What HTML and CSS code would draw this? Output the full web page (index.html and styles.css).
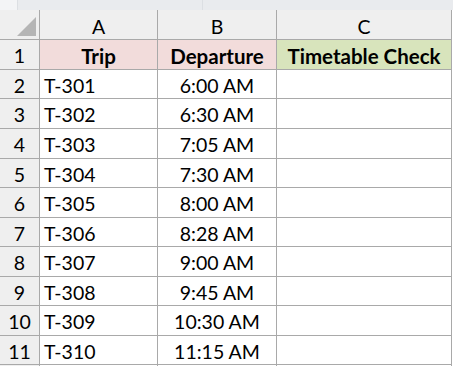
FILE: index.html
```html
<!DOCTYPE html>
<html>
<head>
<meta charset="utf-8">
<link rel="stylesheet" href="styles.css">
</head>
<body>
<div class="topbar"><span class="tb-a"></span><span class="tb-b"></span><span class="tb-c"></span></div>
<div class="sheet">
  <div class="corner"><span class="tri"></span></div>
  <div class="colhead">A</div>
  <div class="colhead">B</div>
  <div class="colhead">C</div>

  <div class="rowhead">1</div>
  <div class="cell hdr pink">Trip</div>
  <div class="cell hdr pink">Departure</div>
  <div class="cell hdr green">Timetable Check</div>

  <div class="rowhead">2</div><div class="cell">T-301</div><div class="cell ctr">6:00 AM</div><div class="cell"></div>
  <div class="rowhead">3</div><div class="cell">T-302</div><div class="cell ctr">6:30 AM</div><div class="cell"></div>
  <div class="rowhead">4</div><div class="cell">T-303</div><div class="cell ctr">7:05 AM</div><div class="cell"></div>
  <div class="rowhead">5</div><div class="cell">T-304</div><div class="cell ctr">7:30 AM</div><div class="cell"></div>
  <div class="rowhead">6</div><div class="cell">T-305</div><div class="cell ctr">8:00 AM</div><div class="cell"></div>
  <div class="rowhead">7</div><div class="cell">T-306</div><div class="cell ctr">8:28 AM</div><div class="cell"></div>
  <div class="rowhead">8</div><div class="cell">T-307</div><div class="cell ctr">9:00 AM</div><div class="cell"></div>
  <div class="rowhead">9</div><div class="cell">T-308</div><div class="cell ctr">9:45 AM</div><div class="cell"></div>
  <div class="rowhead">10</div><div class="cell">T-309</div><div class="cell ctr">10:30 AM</div><div class="cell"></div>
  <div class="rowhead">11</div><div class="cell">T-310</div><div class="cell ctr">11:15 AM</div><div class="cell"></div>
  <div class="rowhead"></div><div class="cell"></div><div class="cell"></div><div class="cell"></div>
</div>
</body>
</html>
```
FILE: styles.css
```css
html, body {
  margin: 0;
  padding: 0;
  background: #ffffff;
  overflow: hidden;
  width: 453px;
  height: 366px;
}

body {
  font-family: Lato, "Open Sans", sans-serif;
  font-size: 19.5px;
  color: #000;
}

.topbar {
  height: 10px;
  background: #e9ebee;
  display: flex;
}

.tb-a { width: 17px; background: #f3f4f6; border-right: 1px solid #dcdfe3; }
.tb-b { width: 184px; border-right: 1px solid #dcdfe3; }
.tb-c { flex: 1; }

.sheet {
  display: grid;
  grid-template-columns: 39px 117px 118px 174px;
  grid-template-rows: 29px 29px 28px 29px 29px 28px 29px 28px 29px 28px 29px 28px 1px;
  column-gap: 1px;
  row-gap: 1px;
  background: #a9a9a9;
  width: 452px;
  padding-right: 1px;
  box-sizing: border-box;
}

.corner {
  background: #efefef;
  position: relative;
}

.tri {
  position: absolute;
  right: 3px;
  bottom: 3px;
  width: 0;
  height: 0;
  border-left: 19px solid transparent;
  border-bottom: 19px solid #b5b5b5;
}

.colhead {
  background: #efefef;
  display: flex;
  align-items: center;
  justify-content: center;
  padding-top: 3px;
  box-sizing: border-box;
}

.rowhead {
  background: #efefef;
  display: flex;
  align-items: center;
  justify-content: center;
  padding-top: 2px;
  box-sizing: border-box;
}

.cell {
  background: #ffffff;
  display: flex;
  align-items: center;
  padding: 2px 0 0 4px;
  box-sizing: border-box;
  white-space: nowrap;
}

.ctr {
  justify-content: center;
  padding-left: 0;
}

.hdr {
  font-weight: bold;
  font-size: 20.5px;
  justify-content: center;
  padding-left: 0;
}

.pink { background: #f2dcdb; }
.green { background: #d8e4bc; }
```
